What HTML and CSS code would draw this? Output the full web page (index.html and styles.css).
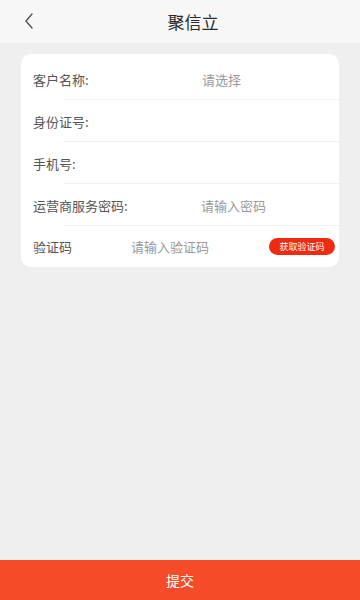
FILE: index.html
```html
<!DOCTYPE html>
<html lang="zh">
<head>
<meta charset="utf-8">
<link rel="stylesheet" href="styles.css">
</head>
<body>
<div class="page">
  <header class="nav">
    <svg class="back" width="12" height="18" viewBox="0 0 12 18"><path d="M9 2 L3 9 L9 16" fill="none" stroke="#555" stroke-width="1.4" stroke-linecap="round" stroke-linejoin="round"/></svg>
    <div class="title">聚信立</div>
  </header>
  <main class="content">
    <div class="card">
      <div class="row first">
        <span class="label">客户名称:</span>
        <span class="value v1">请选择</span>
      </div>
      <div class="row">
        <span class="label">身份证号:</span>
      </div>
      <div class="row">
        <span class="label">手机号:</span>
      </div>
      <div class="row">
        <span class="label">运营商服务密码:</span>
        <span class="value v1 pw">请输入密码</span>
      </div>
      <div class="row last">
        <span class="label">验证码</span>
        <span class="value v2">请输入验证码</span>
        <span class="code-btn">获取验证码</span>
      </div>
    </div>
  </main>
  <footer class="submit">提交</footer>
</div>
</body>
</html>
```

FILE: styles.css
```css
html, body {
  margin: 0;
  padding: 0;
}
body {
  width: 360px;
  height: 600px;
  background: #efefef;
  font-family: "Noto Sans CJK SC", "Noto Sans", sans-serif;
  overflow: hidden;
}
.page {
  display: flex;
  flex-direction: column;
  height: 600px;
}
.nav {
  height: 43px;
  background: #f7f7f7;
  display: flex;
  align-items: center;
  justify-content: center;
  position: relative;
  padding-left: 26px;
}
.back {
  position: absolute;
  left: 23px;
  top: 12px;
}
.title {
  font-size: 17px;
  color: #2a2a2a;
  line-height: 1;
  margin-top: -1px;
}
.content {
  flex: 1;
  padding: 11px 21px 0;
}
.card {
  background: #fff;
  border-radius: 10px;
  padding-top: 4px;
  overflow: hidden;
}
.row {
  height: 42px;
  display: flex;
  align-items: center;
  padding-left: 12px;
  position: relative;
  font-size: 13px;
}
.row::after {
  content: "";
  position: absolute;
  left: 42px;
  right: 0;
  bottom: 0;
  height: 1px;
  background: #f0f0f0;
}
.row.last::after {
  display: none;
}
.row.last {
  height: 41px;
}
.label {
  color: #555;
}
.value {
  color: #999;
  position: absolute;
}
.v1 {
  left: 181px;
}
.pw {
  left: 180px;
}
.v2 {
  left: 110px;
}
.code-btn {
  position: absolute;
  right: 4px;
  top: 12px;
  height: 17px;
  width: 66px;
  border-radius: 9px;
  background: #ee2a10;
  color: #fff;
  font-size: 9px;
  display: flex;
  align-items: center;
  justify-content: center;
}
.submit {
  height: 40px;
  background: #f64b28;
  color: #fff;
  font-size: 14px;
  display: flex;
  align-items: center;
  justify-content: center;
}
```
